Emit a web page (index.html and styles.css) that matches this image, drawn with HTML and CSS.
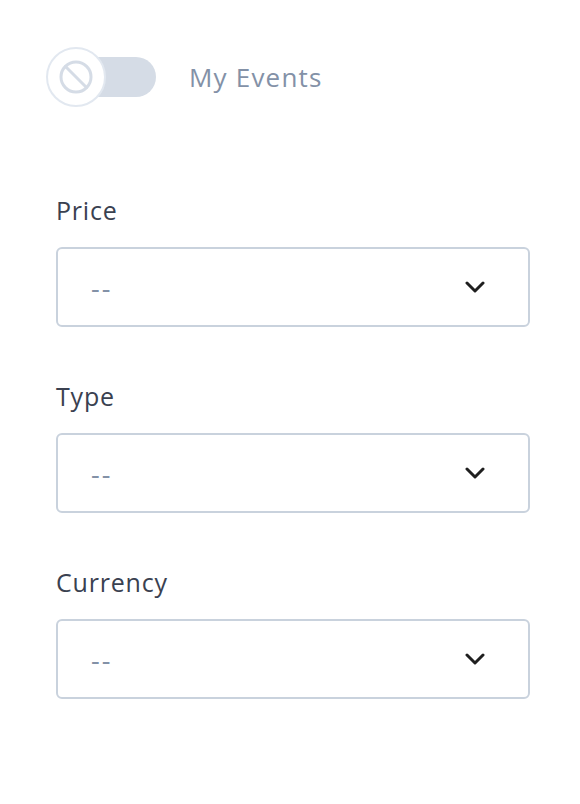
FILE: index.html
```html
<!DOCTYPE html>
<html lang="en">
<head>
  <meta charset="UTF-8">
  <meta name="viewport" content="width=device-width, initial-scale=1.0">
  <title>Filters</title>
  <link rel="stylesheet" href="styles.css">
</head>
<body>
  <div class="filters">
    <div class="toggle-row">
      <div class="switch">
        <div class="switch-track"></div>
        <div class="switch-knob">
          <svg width="34" height="34" viewBox="0 0 34 34" fill="none" stroke="#d5dce6" stroke-width="3" stroke-linecap="round">
            <circle cx="17" cy="17" r="15"></circle>
            <line x1="6.5" y1="6.5" x2="27.5" y2="27.5"></line>
          </svg>
        </div>
      </div>
      <span class="toggle-label">My Events</span>
    </div>

    <div class="fields">
      <div class="field">
        <label class="field-label">Price</label>
        <div class="select-box">
          <span class="select-value">--</span>
          <svg class="chevron" width="20" height="12" viewBox="0 0 20 12" fill="none" stroke="#1f1f1f" stroke-width="3" stroke-linecap="round" stroke-linejoin="round">
            <path d="M2 2 L10 10 L18 2"></path>
          </svg>
        </div>
      </div>

      <div class="field">
        <label class="field-label">Type</label>
        <div class="select-box">
          <span class="select-value">--</span>
          <svg class="chevron" width="20" height="12" viewBox="0 0 20 12" fill="none" stroke="#1f1f1f" stroke-width="3" stroke-linecap="round" stroke-linejoin="round">
            <path d="M2 2 L10 10 L18 2"></path>
          </svg>
        </div>
      </div>

      <div class="field">
        <label class="field-label">Currency</label>
        <div class="select-box">
          <span class="select-value">--</span>
          <svg class="chevron" width="20" height="12" viewBox="0 0 20 12" fill="none" stroke="#1f1f1f" stroke-width="3" stroke-linecap="round" stroke-linejoin="round">
            <path d="M2 2 L10 10 L18 2"></path>
          </svg>
        </div>
      </div>
    </div>
  </div>
</body>
</html>
```

FILE: styles.css
```css
/* Reset */
* {
  margin: 0;
  padding: 0;
  box-sizing: border-box;
}

body {
  font-family: 'Open Sans', 'Noto Sans', sans-serif;
  background: #ffffff;
  color: #3f4756;
}

.filters {
  padding: 47px 50px 0 56px;
}

/* Toggle */
.toggle-row {
  display: flex;
  align-items: center;
  margin-left: -10px;
  gap: 33px;
}

.switch {
  position: relative;
  width: 110px;
  height: 60px;
}

.switch-track {
  position: absolute;
  right: 0;
  top: 10px;
  width: 96px;
  height: 40px;
  border-radius: 20px;
  background: #d5dce6;
}

.switch-knob {
  position: absolute;
  left: 0;
  top: 0;
  width: 60px;
  height: 60px;
  border-radius: 50%;
  background: #ffffff;
  border: 2px solid #e2e8f0;
  display: flex;
  align-items: center;
  justify-content: center;
}

.toggle-label {
  font-size: 26px;
  color: #8391a7;
  letter-spacing: 1.2px;
}

/* Fields */
.fields {
  display: flex;
  flex-direction: column;
  gap: 55px;
  margin-top: 89px;
}

.field-label {
  display: block;
  font-size: 25px;
  line-height: 28px;
  margin-bottom: 23px;
  color: #3a4150;
  letter-spacing: 0.8px;
}

.select-box {
  height: 80px;
  border: 2px solid #c9d2dd;
  border-radius: 6px;
  display: flex;
  align-items: center;
  justify-content: space-between;
  padding: 0 43px 0 33px;
}

.select-value {
  font-size: 27px;
  color: #8391a7;
  letter-spacing: 2px;
}

.chevron {
  display: block;
}
```
